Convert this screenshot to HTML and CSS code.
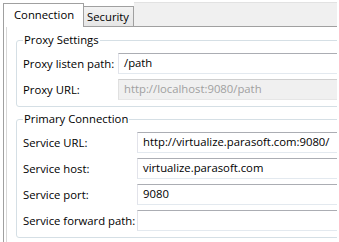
FILE: index.html
```html
<!DOCTYPE html>
<html>
<head>
<meta charset="utf-8">
<link rel="stylesheet" href="styles.css">
</head>
<body>
<div class="frame">
  <div class="tabbar">
    <div class="gap"></div>
    <div class="tab active">Connection</div>
    <div class="tab inactive">Security</div>
    <div class="filler"></div>
  </div>
  <div class="pane">
    <div class="inner">
      <div class="group g1">
        <div class="legend">Proxy Settings</div>
        <div class="form">
          <div class="label">Proxy listen path:</div>
          <div class="field">/path</div>
          <div class="label">Proxy URL:</div>
          <div class="field disabled">http://localhost:9080/path</div>
        </div>
      </div>
      <div class="group g2">
        <div class="legend">Primary Connection</div>
        <div class="form">
          <div class="label">Service URL:</div>
          <div class="field">http://virtualize.parasoft.com:9080/</div>
          <div class="label">Service host:</div>
          <div class="field">virtualize.parasoft.com</div>
          <div class="label">Service port:</div>
          <div class="field">9080</div>
          <div class="label">Service forward path:</div>
          <div class="field"></div>
        </div>
      </div>
    </div>
  </div>
</div>
</body>
</html>
```
FILE: styles.css
```css
html, body {
  margin: 0;
  padding: 0;
  background: #fff;
}
body {
  width: 339px;
  height: 242px;
  overflow: hidden;
  font-family: "Open Sans", "Noto Sans", sans-serif;
  font-size: 11.3px;
  color: #000;
}
.frame {
  width: 337px;
  height: 242px;
  overflow: hidden;
}
.tabbar {
  display: flex;
  align-items: flex-end;
  height: 27px;
}
.gap {
  width: 3px;
  height: 1px;
  flex: none;
  visibility: hidden;
}
.tab {
  box-sizing: border-box;
  flex: none;
  border: 1px solid #a0a0a0;
}
.active {
  width: 81px;
  height: 24px;
  border-bottom: none;
  background: #fff;
  padding: 2px 0 0 10px;
  line-height: 18px;
  position: relative;
  z-index: 1;
}
.inactive {
  width: 51px;
  height: 21px;
  margin-left: -1px;
  background: linear-gradient(#f2f2f2, #e6e6e6);
  padding: 1px 0 0 3px;
  line-height: 17px;
}
.filler {
  flex: 1;
  height: 25px;
  box-sizing: border-box;
  background: #f0f0f0;
  border-top: 1px solid #e2e2e2;
  border-bottom: 1px solid #a0a0a0;
}
.pane {
  margin-left: 3px;
  border-left: 1px solid #a0a0a0;
  height: 215px;
}
.inner {
  margin-left: 2px;
  border-left: 1px solid #d8d8d8;
  height: 215px;
  padding-left: 9px;
  padding-top: 13px;
  box-sizing: border-box;
}
.group {
  position: relative;
  width: 400px;
  box-sizing: border-box;
  border: 1px solid #d5dfe5;
  border-radius: 3px;
  padding: 12px 0 6px 6px;
}
.g2 {
  margin-top: 12px;
}
.legend {
  position: absolute;
  top: -9px;
  left: 6px;
  padding: 0 1px;
  background: #fff;
  line-height: 16px;
}
.form {
  display: grid;
  row-gap: 5px;
  align-items: center;
}
.g1 .form {
  grid-template-columns: 95px 1fr;
}
.g2 .form {
  grid-template-columns: 114px 1fr;
}
.label {
  white-space: nowrap;
}
.field {
  box-sizing: border-box;
  height: 21px;
  border: 1px solid;
  border-color: #abadb3 #e2e3ea #e3e9ef #e2e3ea;
  padding-left: 5px;
  line-height: 18px;
  white-space: nowrap;
}
.disabled {
  background: #f0f0f0;
  color: #a0a0a0;
  border-color: #cfcfcf #e0e0e0 #e6e6e6 #e0e0e0;
}
```
